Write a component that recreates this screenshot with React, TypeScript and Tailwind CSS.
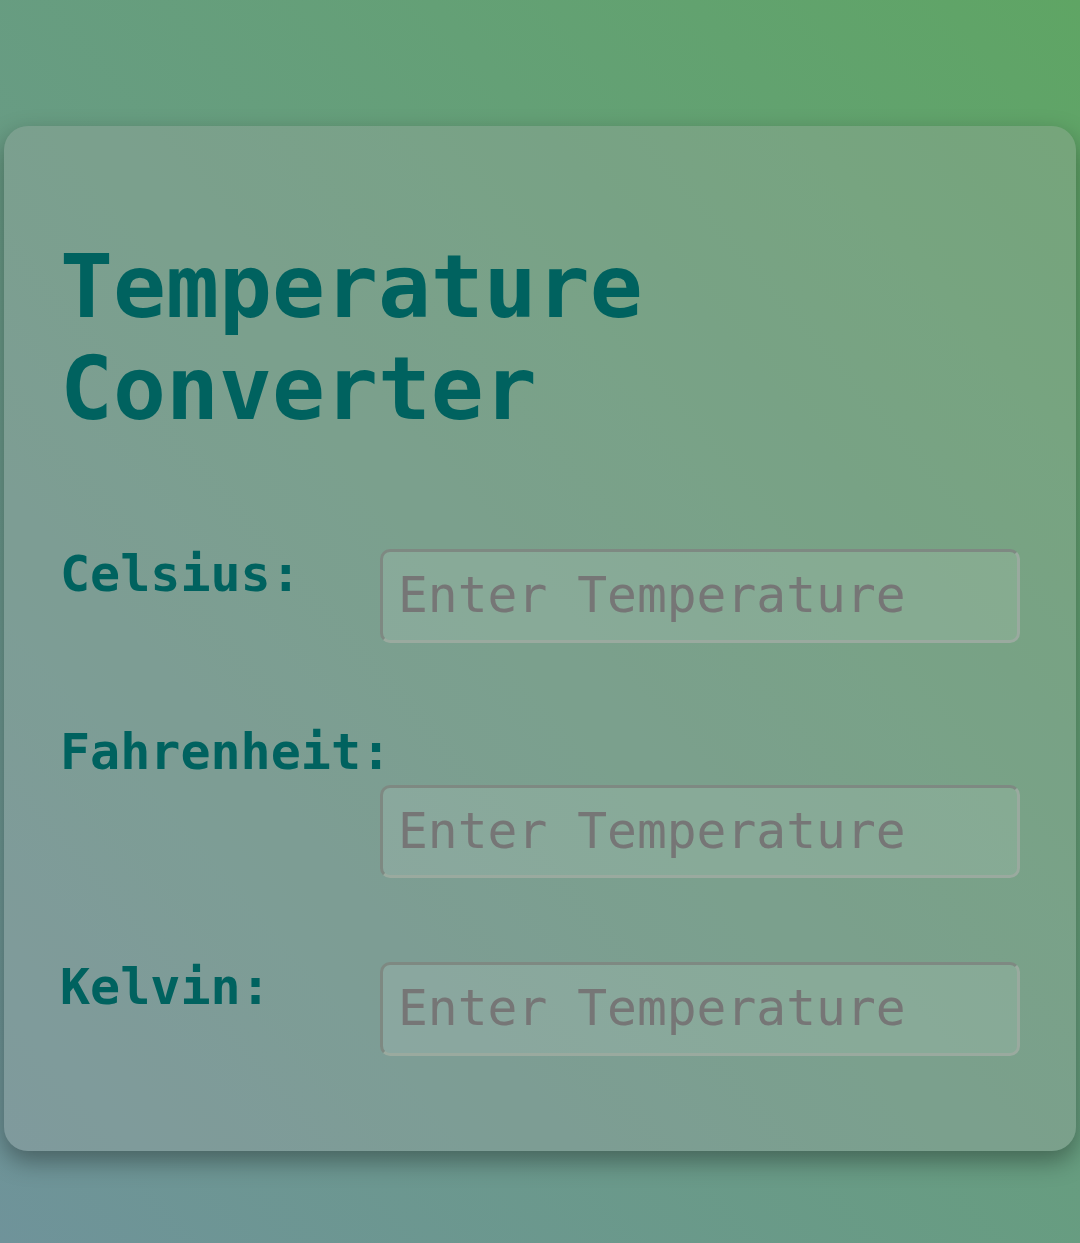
import { useState } from 'react';

type Unit = 'celsius' | 'fahrenheit' | 'kelvin';

const fields: { key: Unit; label: string }[] = [
  { key: 'celsius', label: 'Celsius:' },
  { key: 'fahrenheit', label: 'Fahrenheit:' },
  { key: 'kelvin', label: 'Kelvin:' },
];

function convert(from: Unit, raw: string): Record<Unit, string> {
  const v = parseFloat(raw);
  if (raw === '' || isNaN(v)) return { celsius: '', fahrenheit: '', kelvin: '', [from]: raw } as Record<Unit, string>;
  let c = v;
  if (from === 'fahrenheit') c = ((v - 32) * 5) / 9;
  if (from === 'kelvin') c = v - 273.15;
  const fmt = (n: number) => String(Math.round(n * 100) / 100);
  return {
    celsius: from === 'celsius' ? raw : fmt(c),
    fahrenheit: from === 'fahrenheit' ? raw : fmt((c * 9) / 5 + 32),
    kelvin: from === 'kelvin' ? raw : fmt(c + 273.15),
  };
}

export default function App() {
  const [values, setValues] = useState<Record<Unit, string>>({ celsius: '', fahrenheit: '', kelvin: '' });

  return (
    <div className="min-h-screen bg-linear-to-tr from-[#6f939a] to-[#5fa564] px-1 pt-[126px] pb-10 font-['DejaVu_Sans_Mono',monospace]">
      <div className="rounded-3xl bg-[#aaaaaa]/30 px-[56px] pt-[110px] pb-[95px] shadow-[0_10px_24px_rgba(0,0,0,0.35)]">
        <h1 className="mb-[104px] text-[88px] font-bold leading-[1.164] text-[#00625f]">
          Temperature Converter
        </h1>

        {fields.map((f, i) => (
          <div key={f.key} className={`flex flex-wrap items-start justify-between ${i < fields.length - 1 ? 'mb-[80px]' : ''}`}>
            <label htmlFor={f.key} className="text-[50px] font-bold leading-[1.164] text-[#00625f]">
              {f.label}
            </label>
            <input
              id={f.key}
              type="text"
              placeholder="Enter Temperature"
              value={values[f.key]}
              onChange={(e) => setValues(convert(f.key, e.target.value))}
              className="ml-auto mt-1 w-2/3 rounded-[10px] border-[3px] border-t-[#7e8982] border-l-[#7e8982] border-b-[#9aaa9f] border-r-[#9aaa9f] bg-white/10 pl-[15px] pr-3 py-[15px] text-[49.6px] leading-[1.164] text-[#333] outline-none placeholder:text-[#767676]"
            />
          </div>
        ))}
      </div>
    </div>
  );
}
